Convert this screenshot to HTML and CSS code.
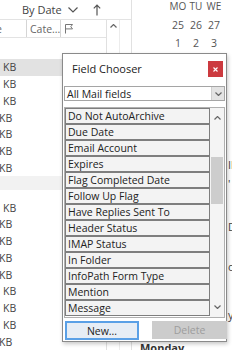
FILE: index.html
```html
<!DOCTYPE html>
<html>
<head>
<meta charset="utf-8">
<link rel="stylesheet" href="styles.css">
</head>
<body>
<div class="app">
  <section class="mail">
    <div class="sortbar">
      <span class="sort-label">By Date</span>
      <svg class="sort-chev" width="10" height="6" viewBox="0 0 10 6"><polyline points="0.5,0.5 5,5 9.5,0.5"/></svg>
      <svg class="sort-arrow" width="8" height="12" viewBox="0 0 8 12"><path d="M4 11.5V1.2M0.8 4.4L4 1.2L7.2 4.4"/></svg>
    </div>
    <div class="mailbody">
      <div class="listcol">
        <div class="colhead">
          <div class="ch ch-size"><span>e</span></div>
          <div class="ch ch-cat">Cate...</div>
          <div class="ch ch-flag"><svg width="10" height="11" viewBox="0 0 10 11"><path d="M1.5 10.5V1.5H8.5L6.8 3.7L8.5 5.9H1.5"/></svg></div>
        </div>
        <div class="group-top"></div>
        <div class="row sel"><span class="kb">KB</span></div>
        <div class="row"><span class="kb">KB</span></div>
        <div class="row"><span class="kb">KB</span></div>
        <div class="row neg"><span class="kb">KB</span></div>
        <div class="row neg"><span class="kb">KB</span></div>
        <div class="row neg"><span class="kb">KB</span></div>
        <div class="row neg"><span class="kb">KB</span></div>
        <div class="group"></div>
        <div class="group-gap"></div>
        <div class="row"><span class="kb">KB</span></div>
        <div class="row neg"><span class="kb">KB</span></div>
        <div class="row neg"><span class="kb">KB</span></div>
        <div class="row neg"><span class="kb">KB</span></div>
        <div class="row neg"><span class="kb">KB</span></div>
        <div class="row"><span class="kb">KB</span></div>
        <div class="row"><span class="kb">KB</span></div>
        <div class="row"><span class="kb">KB</span></div>
        <div class="row neg"><span class="kb">KB</span></div>
      </div>
      <div class="vscroll">
        <svg width="7" height="4" viewBox="0 0 7 4"><polyline points="0.5,3.5 3.5,0.5 6.5,3.5"/></svg>
      </div>
    </div>
  </section>
  <section class="cal">
    <div class="cal-head"><span>MO</span><span>TU</span><span>WE</span></div>
    <div class="cal-row"><span>25</span><span>26</span><span>27</span></div>
    <div class="cal-row"><span>1</span><span>2</span><span>3</span></div>
    <div class="peek">
      <div class="pk pk1">Il</div>
      <div class="pk pk2">'</div>
      <div class="pk pk3">D</div>
      <div class="pk pk4">or</div>
      <div class="pk pk5">y</div>
    </div>
    <div class="day">Monday</div>
  </section>
</div>

<div class="dialog">
  <div class="dlg-title">
    <span>Field Chooser</span>
    <div class="close"><svg width="5" height="5" viewBox="0 0 5 5"><path d="M0.5 0.5L4.5 4.5M4.5 0.5L0.5 4.5"/></svg></div>
  </div>
  <div class="combo">
    <span>All Mail fields</span>
    <div class="combo-btn"><svg width="7" height="4" viewBox="0 0 7 4"><polyline points="0.5,0.5 3.5,3.5 6.5,0.5"/></svg></div>
  </div>
  <div class="fieldlist">
    <div class="items">
      <div class="item">Do Not AutoArchive</div>
      <div class="item">Due Date</div>
      <div class="item">Email Account</div>
      <div class="item">Expires</div>
      <div class="item">Flag Completed Date</div>
      <div class="item">Follow Up Flag</div>
      <div class="item">Have Replies Sent To</div>
      <div class="item">Header Status</div>
      <div class="item">IMAP Status</div>
      <div class="item">In Folder</div>
      <div class="item">InfoPath Form Type</div>
      <div class="item">Mention</div>
      <div class="item">Message</div>
    </div>
    <div class="sb">
      <div class="sb-btn"><svg width="7" height="4" viewBox="0 0 7 4"><polyline points="0.5,3.5 3.5,0.5 6.5,3.5"/></svg></div>
      <div class="sb-track"><div class="sb-thumb"></div></div>
      <div class="sb-btn"><svg width="7" height="4" viewBox="0 0 7 4"><polyline points="0.5,0.5 3.5,3.5 6.5,0.5"/></svg></div>
    </div>
  </div>
  <div class="buttons">
    <div class="btn btn-new">New...</div>
    <div class="btn btn-del">Delete</div>
  </div>
</div>
</body>
</html>
```

FILE: styles.css
```css
* { box-sizing: border-box; margin: 0; padding: 0; }
html, body { width: 232px; height: 350px; overflow: hidden; }
body {
  background: #fff;
  font-family: "Open Sans", "Noto Sans", sans-serif;
  color: #444;
  position: relative;
}
svg { display: block; }

.app { display: grid; grid-template-columns: 131px 101px; height: 350px; }

/* message list */
.mail { display: flex; flex-direction: column; overflow: hidden; }
.sortbar { height: 19px; display: flex; align-items: center; padding-left: 22px; font-size: 11px; color: #444; }
.sort-chev { margin-left: 6px; fill: none; stroke: #555; stroke-width: 1.2; }
.sort-arrow { margin-left: 15px; fill: none; stroke: #555; stroke-width: 1.2; }
.mailbody { display: grid; grid-template-columns: 106px 14px; border-top: 1px solid #e3e3e3; flex: 1; }
.colhead { height: 18px; display: grid; grid-template-columns: 26px 34px 46px; border-bottom: 1px solid #e3e3e3; font-size: 10.5px; color: #666; }
.ch { display: flex; align-items: center; overflow: hidden; }
.ch-size span { margin-left: -4px; }
.ch-cat, .ch-flag { border-left: 1px solid #d5d5d5; padding-left: 3px; }
.ch-flag svg { fill: none; stroke: #777; stroke-width: 1; }
.group-top { height: 21px; }
.row { height: 16.75px; display: flex; align-items: center; font-size: 10.5px; color: #444; padding-left: 3px; }
.row.neg { padding-left: 0; }
.row.neg .kb { margin-left: -1px; }
.row.sel { background: #e2e2e2; }
.group { height: 14px; background: #f2f2f2; }
.group-gap { height: 9px; }
.vscroll { border-left: 1px solid #e0e0e0; border-right: 1px solid #ececec; display: flex; justify-content: center; padding-top: 4px; }
.vscroll svg { fill: none; stroke: #666; stroke-width: 1.2; }

/* calendar */
.cal { border-left: 1px solid #e1e1e1; display: flex; flex-direction: column; overflow: hidden; height: 350px; }
.cal-head, .cal-row { display: grid; grid-template-columns: repeat(3, 18px); padding-left: 37px; text-align: center; color: #555; }
.cal-head { height: 12px; line-height: 12px; font-size: 10px; letter-spacing: 0.2px; margin-bottom: 4px; }
.cal-row { height: 18px; line-height: 18px; font-size: 10.5px; }
.peek { padding-left: 96px; font-size: 11px; color: #444; white-space: nowrap; }
.pk { height: 14px; line-height: 14px; }
.pk1 { margin-top: 106px; }
.pk2 { margin-top: 5px; }
.pk3 { margin-top: 29px; }
.pk4 { margin-top: 26px; }
.pk5 { margin-top: 34px; }
.day { margin-top: auto; margin-bottom: -6px; height: 16px; line-height: 16px; padding-left: 8px; font-size: 11px; font-weight: bold; color: #333; }

/* dialog */
.dialog {
  position: absolute; left: 62px; top: 53px; width: 165px; height: 289px;
  background: #fff; border: 1px solid #8a8a8a;
  box-shadow: 1px 2px 4px rgba(0,0,0,0.22);
  display: flex; flex-direction: column; padding: 0 1px;
}
.dlg-title { height: 28px; display: flex; align-items: center; justify-content: space-between; padding: 0 2px 0 8px; font-size: 11px; color: #222; }
.close { width: 15px; height: 16px; background: #cc3a3f; display: flex; align-items: center; justify-content: center; margin-top: 2px; }
.close svg { stroke: #fff; stroke-width: 1.1; }
.combo { margin-top: 4px; height: 15px; border: 1px solid #a5a5a5; display: flex; align-items: center; justify-content: space-between; font-size: 10.5px; color: #222; padding-left: 2px; }
.combo-btn { width: 13px; height: 13px; background: #e3e3e3; border-left: 1px solid #cfcfcf; display: flex; align-items: center; justify-content: center; }
.combo-btn svg, .sb-btn svg { fill: none; stroke: #666; stroke-width: 1.2; }
.fieldlist { margin-top: 6px; height: 211px; border: 1px solid #b0b0b0; display: grid; grid-template-columns: 1fr 14px; }
.items { display: flex; flex-direction: column; overflow: hidden; }
.item { flex: none; height: 16px; border: 1px solid #7e7e7e; background: #f3f3f3; font-size: 10.5px; line-height: 14px; color: #222; padding-left: 2px; white-space: nowrap; overflow: hidden; }
.sb { background: #f4f4f4; display: flex; flex-direction: column; }
.sb-btn { height: 20px; display: flex; align-items: center; justify-content: center; }
.sb-track { flex: 1; padding-top: 29px; }
.sb-thumb { height: 47px; background: #cdcdcd; margin: 0 1px; }
.buttons { margin-top: 3px; display: flex; justify-content: space-between; padding-left: 1px; margin-right: -2px; }
.btn { height: 19px; display: flex; align-items: center; justify-content: center; font-size: 10.5px; }
.btn-new { width: 74px; border: 2px solid #5aa0e6; background: #e6edf5; color: #222; }
.btn-del { width: 75px; height: 18px; background: #cccccc; color: #9d9d9d; }
```
